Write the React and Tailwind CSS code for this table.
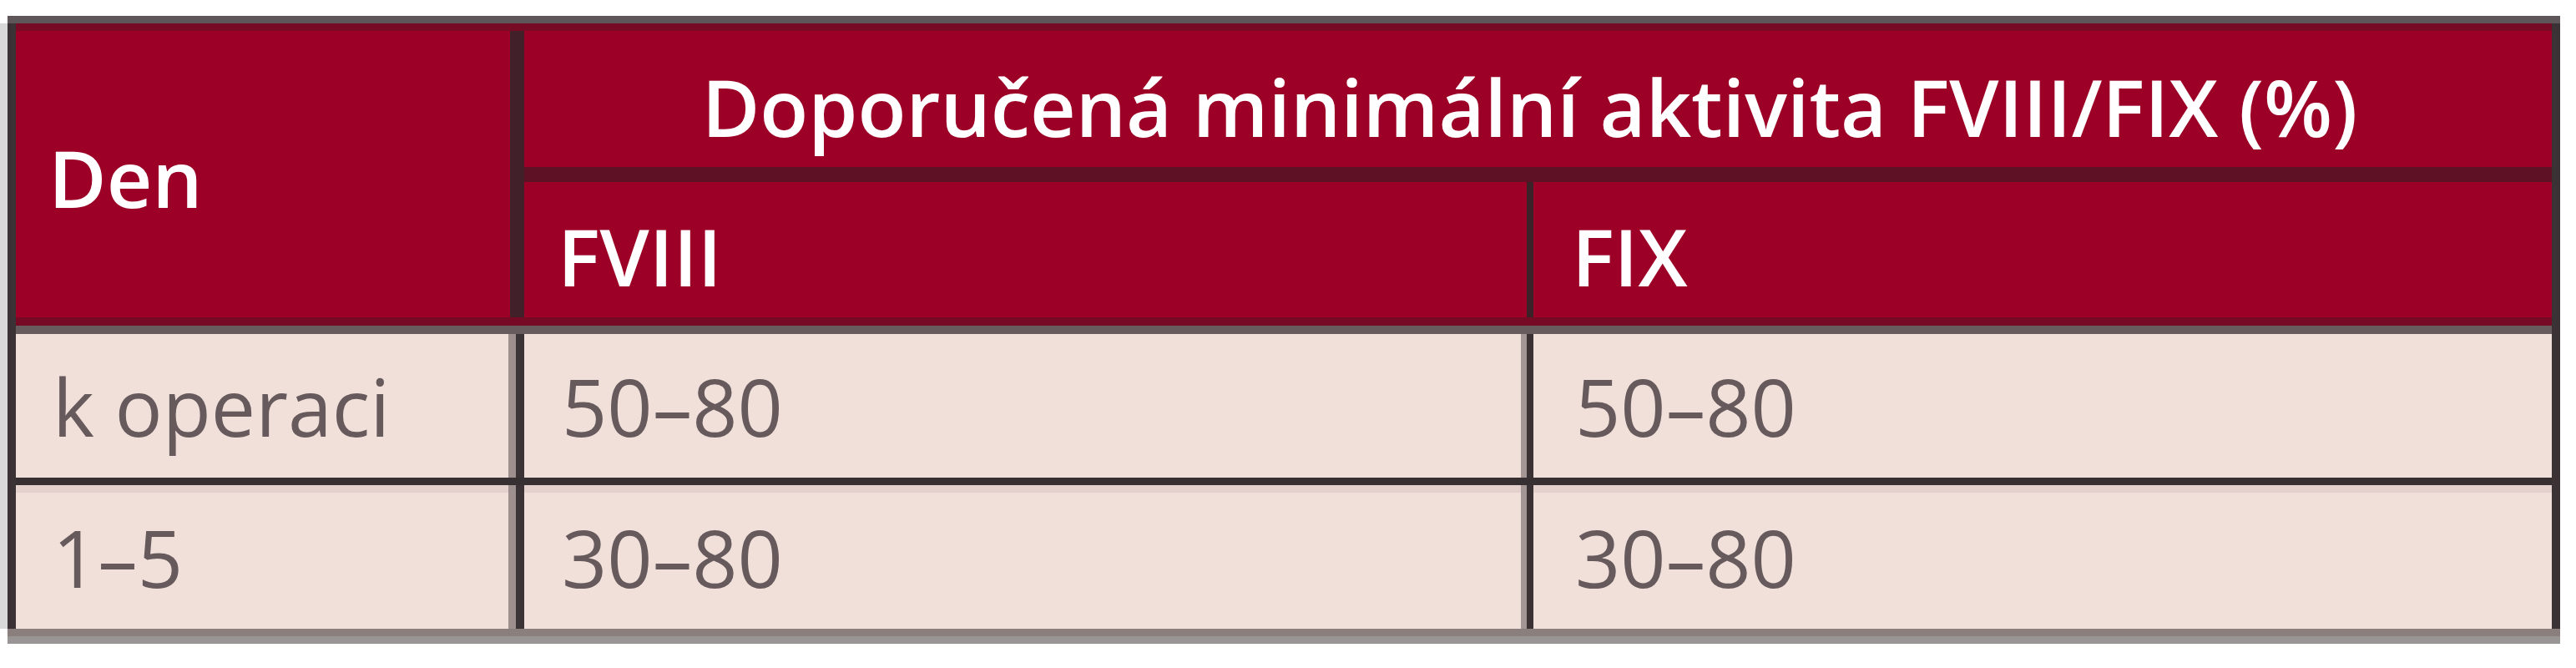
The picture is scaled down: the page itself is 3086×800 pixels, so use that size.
import React from 'react';

const rows = [
  { day: 'k operaci', fviii: '50–80', fix: '50–80' },
  { day: '1–5', fviii: '30–80', fix: '30–80' },
];

const App = () => {
  return (
    <div className="w-[3086px] h-[800px] bg-white pt-[19px] font-['Open_Sans',sans-serif]">
      <div className="flex">
        {/* soft gray edge left of the table */}
        <div className="w-[9px] mt-[9px] mb-[18px] bg-[#d9d9d9]" />

        <div className="w-[3058px]">
          {/* top rule */}
          <div className="h-[9px] bg-[#5f5659]" />

          <div className="border-x-[10px] border-[#3b3235]">
            {/* header */}
            <div className="flex h-[362px] bg-[#9c0027] border-t-[9px] border-t-[#770a24] border-b-[10px] border-b-[#760a25] text-white font-semibold text-[95px] leading-none">
              <div className="w-[609px] flex items-center pl-[39px] pt-[8px] border-r-[17px] border-r-[#42202a]">
                Den
              </div>
              <div className="flex-1 flex flex-col">
                <div className="h-[163px] flex items-center justify-center pt-[18px] pr-[20px]">
                  Doporučená minimální aktivita FVIII/FIX (%)
                </div>
                <div className="h-[18px] bg-[#5e1125]" />
                <div className="flex-1 flex">
                  <div className="w-[1209px] flex items-center pl-[40px] pt-[14px] border-r-[8px] border-r-[#3a2228]">
                    FVIII
                  </div>
                  <div className="flex-1 flex items-center pl-[46px] pt-[14px]">FIX</div>
                </div>
              </div>
            </div>
            <div className="h-[10px] bg-[#675b5e]" />

            {/* body */}
            {rows.map((r, i) => (
              <div
                key={r.day}
                className={
                  i === 0
                    ? 'flex h-[172px] bg-[#f1e0da] text-[#665a5d] font-normal text-[95px] leading-none'
                    : 'flex h-[181px] bg-[#f1e0da] text-[#665a5d] font-normal text-[95px] leading-none border-t-[9px] border-t-[#363032] shadow-[inset_0_9px_0_#e4d0cc]'
                }
              >
                <div className="w-[609px] flex items-center pl-[44px] border-r-[10px] border-r-[#3c3336] shadow-[inset_-9px_0_0_#9d908f]">
                  {r.day}
                </div>
                <div className="w-[1209px] flex items-center pl-[45px] border-r-[8px] border-r-[#3a3234] shadow-[inset_-7px_0_0_#a39695]">
                  {r.fviii}
                </div>
                <div className="flex-1 flex items-center pl-[50px]">{r.fix}</div>
              </div>
            ))}
          </div>

          {/* bottom rule */}
          <div className="h-[9px] bg-[#8b7f7d]" />
          <div className="h-[9px] bg-[#999595]" />
        </div>
      </div>
    </div>
  );
};

export default App;
